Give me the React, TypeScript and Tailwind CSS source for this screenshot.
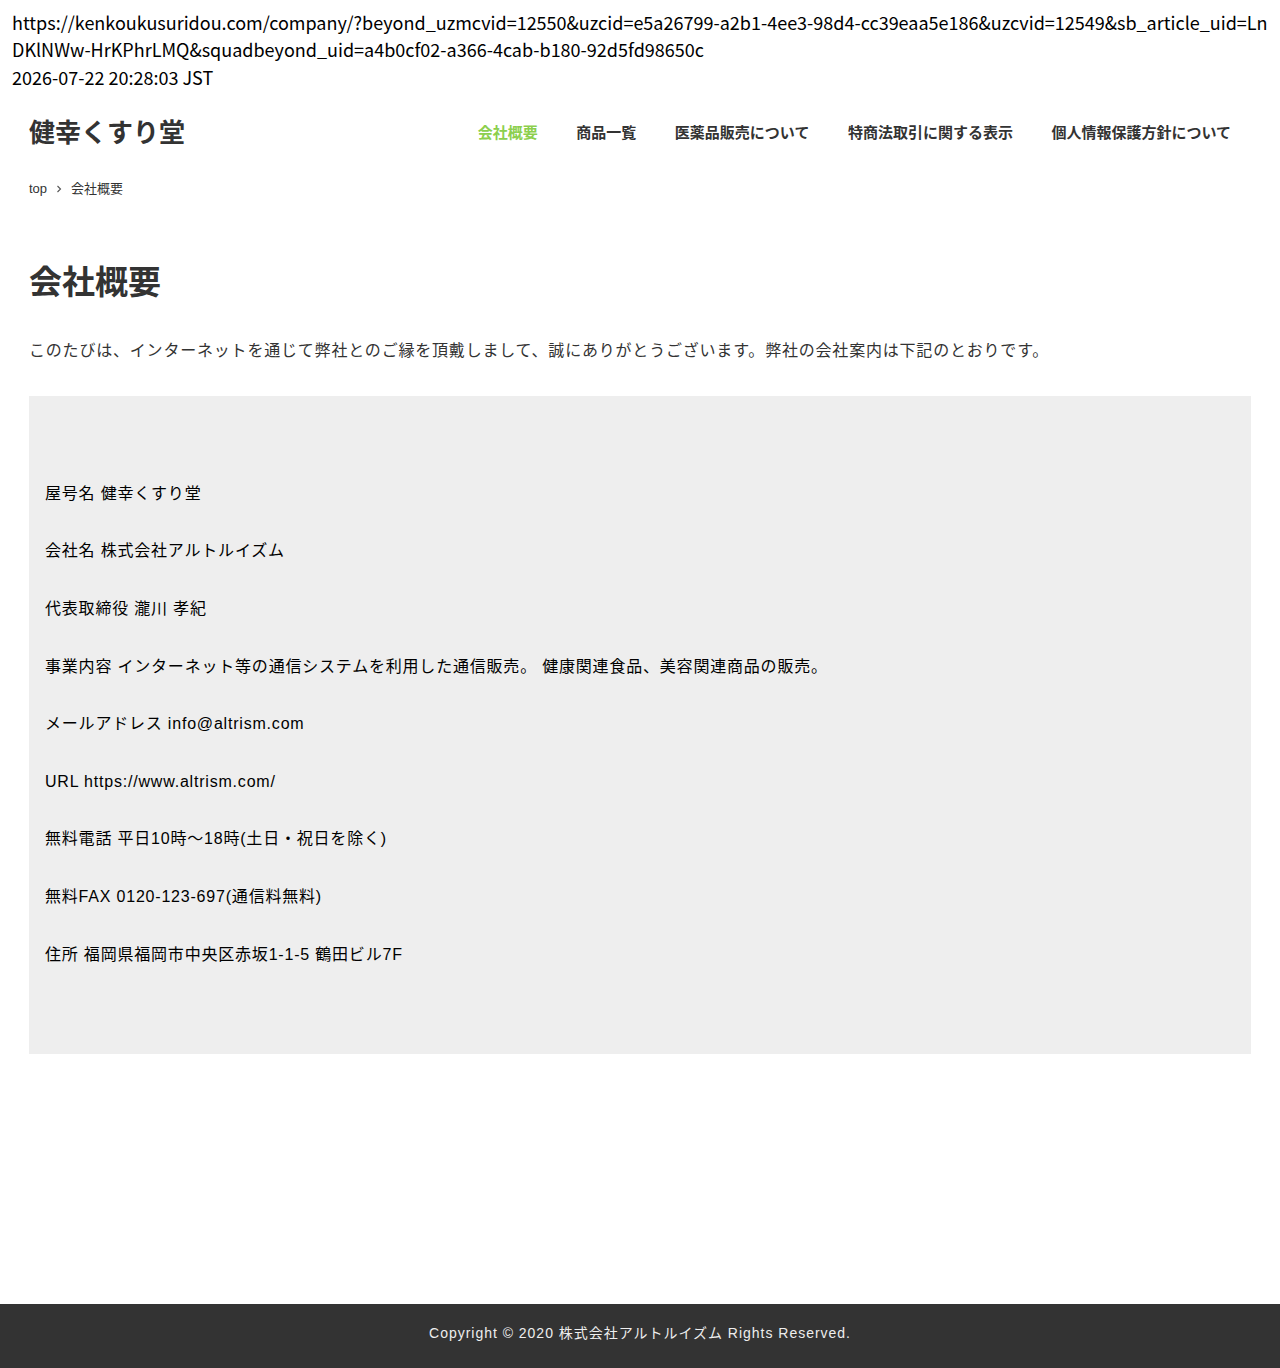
const jp = "font-['Liberation_Sans','Noto_Sans_CJK_JP',sans-serif]";

const navItems = [
  { label: "会社概要", active: true },
  { label: "商品一覧" },
  { label: "医薬品販売について" },
  { label: "特商法取引に関する表示" },
  { label: "個人情報保護方針について" },
];

const profile = [
  "屋号名 健幸くすり堂",
  "会社名 株式会社アルトルイズム",
  "代表取締役 瀧川 孝紀",
  "事業内容 インターネット等の通信システムを利用した通信販売。 健康関連食品、美容関連商品の販売。",
  "メールアドレス info@altrism.com",
  "URL https://www.altrism.com/",
  "無料電話 平日10時～18時(土日・祝日を除く)",
  "無料FAX 0120-123-697(通信料無料)",
  "住所 福岡県福岡市中央区赤坂1-1-5 鶴田ビル7F",
];

export default function App() {
  return (
    <div className={`min-h-[1368px] flex flex-col bg-white ${jp}`}>
      {/* address line */}
      <div className="px-3 pt-[9px] text-[18px] leading-[27px] text-black font-['Noto_Sans_CJK_JP',sans-serif] break-all">
        <p>
          https://kenkoukusuridou.com/company/?beyond_uzmcvid=12550&uzcid=e5a26799-a2b1-4ee3-98d4-cc39eaa5e186&uzcvid=12549&sb_article_uid=LnDKlNWw-HrKPhrLMQ&squadbeyond_uid=a4b0cf02-a366-4cab-b180-92d5fd98650c
        </p>
        <p className="mt-px">2026-07-22 20:28:03 JST</p>
      </div>

      {/* header */}
      <header className="flex items-center justify-between pl-[29px] pr-[49px] h-[56px] mt-[14px]">
        <a className="text-[26px] font-bold text-[#333]">健幸くすり堂</a>
        <nav className="flex items-center gap-[38.5px]">
          {navItems.map((item) => (
            <a
              key={item.label}
              className={`text-[15px] font-bold ${item.active ? "text-[#8ccf4d]" : "text-[#333]"}`}
            >
              {item.label}
            </a>
          ))}
        </nav>
      </header>

      {/* breadcrumb */}
      <div className="flex items-center gap-[9px] pl-[29px] mt-[18px] text-[13px] text-[#333]">
        <span>top</span>
        <svg width="6" height="8" viewBox="0 0 6 8" fill="none" stroke="#555" strokeWidth="1.1">
          <path d="M1.5 1 L4.5 4 L1.5 7" />
        </svg>
        <span>会社概要</span>
      </div>

      <main className="px-[29px] flex-1">
        <h1 className="mt-[63px] text-[33px] font-bold text-[#333] leading-tight">会社概要</h1>
        <p className="mt-[36px] text-[16px] text-[#333] tracking-[0.05em]">
          このたびは、インターネットを通じて弊社とのご縁を頂戴しまして、誠にありがとうございます。弊社の会社案内は下記のとおりです。
        </p>

        <div className="mt-[33px] bg-[#eeeeee] px-4 pt-[84px] pb-[56px]">
          {profile.map((line) => (
            <p key={line} className="text-[16px] leading-[28.8px] mb-[28.8px] text-black tracking-[0.05em]">
              {line}
            </p>
          ))}
        </div>
      </main>

      <footer className="h-[64px] pb-[5px] bg-[#333333] flex items-center justify-center text-[14px] text-[#eeeeee] tracking-[0.07em]">
        Copyright © 2020 株式会社アルトルイズム Rights Reserved.
      </footer>
    </div>
  );
}
